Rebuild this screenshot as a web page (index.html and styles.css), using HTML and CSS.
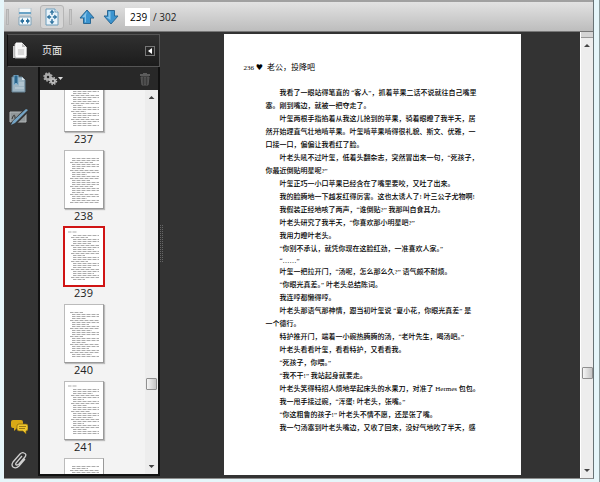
FILE: index.html
```html
<!DOCTYPE html>
<html lang="zh-CN">
<head>
    <meta charset="UTF-8">
    <meta name="viewport" content="width=device-width, initial-scale=1.0">
    <title>老公，投降吧</title>
    <link rel="stylesheet" href="styles.css">
</head>
<body>
    <div class="window">
        <header class="toolbar">
            <span class="grip"></span>
            <button type="button" class="tool-btn" aria-label="适合宽度">
                <svg width="14" height="18" viewBox="0 0 14 18">
                    <path d="M1 0h12v7H1z" fill="#f4f8fa" stroke="#b4c2ca"/>
                    <path d="M1 4h12v2H1z" fill="#6aa3c6"/>
                    <path d="M1 9h12v8H1z" fill="#f4f9fc" stroke="#7fa3ba"/>
                    <path d="M2 13l3-3v2h1v2H5v2zM12 13l-3-3v2H8v2h1v2z" fill="#2d729f"/>
                </svg>
            </button>
            <button type="button" class="tool-btn active" aria-label="适合页面">
                <svg width="14" height="18" viewBox="0 0 14 18">
                    <path d="M1 1h9l3 3v13H1z" fill="#e8f3fa" stroke="#6d9dbb"/>
                    <path d="M7 2l2 2.500H7.500v2h-1v-2H5zM7 16l2-2.500H7.500v-2h-1v2H5zM2 9l2.500-2v1.500h1.500v1H4.500V11zM12 9L9.500 7v1.500H8v1h1.500V11z" fill="#2d729f" stroke="#2d729f" stroke-width=".5"/>
                    <path d="M10 1v3h3" fill="#fff" stroke="#6d9dbb"/>
                </svg>
            </button>
            <span class="grip"></span>
            <button type="button" class="tool-btn arrow" aria-label="上一页">
                <svg width="16" height="16" viewBox="0 0 16 16">
                    <path d="M8 1l7 8h-3.500v5.500h-7V9H1z" fill="#3c94cf" stroke="#2b6894" stroke-linejoin="round"/>
                    <path d="M8 2.500L3 8.300h3v5h1V6z" fill="#86c3e8"/>
                </svg>
            </button>
            <button type="button" class="tool-btn arrow" aria-label="下一页">
                <svg width="16" height="16" viewBox="0 0 16 16">
                    <path d="M8 15l7-8h-3.500V1.500h-7V7H1z" fill="#3c94cf" stroke="#2b6894" stroke-linejoin="round"/>
                    <path d="M5.500 2.500h2V11L3 8h2.500z" fill="#86c3e8"/>
                </svg>
            </button>
            <input type="text" class="page-input" value="239" aria-label="页码">
            <span class="page-total">/ 302</span>
        </header>

        <div class="workspace">
            <aside class="sidebar">
                <div class="panel-head">
                    <button type="button" class="nav-btn" aria-label="页面">
                        <svg width="16" height="18" viewBox="0 0 16 18">
                            <path d="M1 4h10v12H1z" fill="#c9c9c9"/>
                            <path d="M3 2h8l3 3v11H3z" fill="#fff" stroke="#aaa"/>
                            <path d="M4 1h6l4 4v9H4z" fill="#f4f4f4" stroke="#fff"/>
                            <path d="M10 1v4h4" fill="#bbb"/>
                            <path d="M6 7h6v6H6z" fill="#d9d9d9"/>
                        </svg>
                    </button>
                    <h1>页面</h1>
                    <button type="button" class="collapse" aria-label="折叠">
                        <svg width="4" height="6" viewBox="0 0 4 6"><path d="M0 3l4-3v6z" fill="#fff"/></svg>
                    </button>
                </div>
                <div class="panel-body">
                    <nav class="rail">
                        <button type="button" class="nav-btn" aria-label="书签">
                            <svg width="16" height="18" viewBox="0 0 16 18">
                                <path d="M1 2h10l3 3v12H1z" fill="#9db5c3" stroke="#668395"/>
                                <path d="M11 2v3h3" fill="#dce7ee"/>
                                <path d="M3 0h4v10L5 8l-2 2z" fill="#2b668c" stroke="#81afcc"/>
                                <path d="M8 8h5M8 10h5M4 13h9" stroke="#c4d4dd"/>
                            </svg>
                        </button>
                        <button type="button" class="nav-btn" aria-label="签名">
                            <svg width="20" height="18" viewBox="0 0 20 18">
                                <path d="M1 4h16v10H1z" fill="#909698" stroke="#b2b7b9"/>
                                <path d="M3 11c2-6 3-4 3-1s3-3 3 0" fill="none" stroke="#333"/>
                                <path d="M3 17L19 1" stroke="#333" stroke-width="5"/>
                                <path d="M2 17l2-4L17 1l2 1L6 15z" fill="#74a4c5"/>
                            </svg>
                        </button>
                        <button type="button" class="nav-btn rail-bottom" aria-label="注释">
                            <svg width="18" height="16" viewBox="0 0 18 16">
                                <path d="M3 1h8q2 0 2 2v4q0 2-2 2H7l-3 3V9H3Q1 9 1 7V3q0-2 2-2z" fill="#d9a916"/>
                                <path d="M9 5h7q2 0 2 2v3q0 2-2 2v3l-3-3H9q-2 0-2-2V7q0-2 2-2z" fill="#efc62c" stroke="#806211" stroke-width=".7"/>
                                <path d="M9 7.500h7M9 9.500h6" stroke="#9d7916"/>
                            </svg>
                        </button>
                        <button type="button" class="nav-btn" aria-label="附件">
                            <svg width="18" height="18" viewBox="0 0 18 18">
                                <path d="M12 5l-6 7q-1 2 1 2l2-1 6-7q2-3-1-4-2-1-4 1l-7 8q-2 3 0 5 3 2 6-1l6-7" fill="none" stroke="#d0d0d0" stroke-width="1.300"/>
                            </svg>
                        </button>
                    </nav>
                    <div class="pages">
                        <div class="options">
                            <button type="button" class="option-btn" aria-label="选项">
                                <svg width="20" height="14" viewBox="0 0 20 14">
                                    <circle cx="5" cy="5" r="2.500" fill="none" stroke="#aaa" stroke-width="2.500"/>
                                    <circle cx="5" cy="5" r="4" fill="none" stroke="#aaa" stroke-width="1.500" stroke-dasharray="1.600 1.540"/>
                                    <circle cx="10" cy="9" r="2" fill="#333" stroke="#bbb" stroke-width="2"/>
                                    <circle cx="10" cy="9" r="3.500" fill="none" stroke="#bbb" stroke-width="1.500" stroke-dasharray="1.400 1.350"/>
                                    <path d="M15 5h5l-2.500 3z" fill="#ddd"/>
                                </svg>
                            </button>
                            <button type="button" class="option-btn" aria-label="删除" disabled>
                                <svg width="12" height="14" viewBox="0 0 12 14">
                                    <path d="M1 3h10M4 2h4" stroke="#5c5c5c" stroke-width="2"/>
                                    <path d="M2 5h8l-1 8H3z" fill="#4c4c4c" stroke="#585858"/>
                                    <path d="M4.500 5v8M7.500 5v8" stroke="#3b3b3b"/>
                                </svg>
                            </button>
                        </div>
                        <div class="thumb-area">
                            <div class="thumbs" id="thumbs"></div>
                            <div class="scrollbar">
                                <span class="scroll-up"></span>
                                <span class="scroll-thumb"></span>
                                <span class="scroll-down"></span>
                            </div>
                        </div>
                    </div>
                </div>
            </aside>

            <div class="splitter"><span></span></div>

            <main class="viewer">
                <article class="page">
                    <h2><span class="folio">236 <span class="heart">♥</span></span>老公，投降吧</h2>
                    <p>我看了一眼站得笔直的 “客人”，抓着苹果二话不说就往自己嘴里<br>塞。刚到嘴边，就被一把夺走了。</p>
                    <p>叶玺两根手指掐着从我这儿抢到的苹果，骑着眼瞪了我半天，居<br>然开始理直气壮地啃苹果。叶玺啃苹果啃得很礼貌、斯文、优雅，一<br>口接一口，偏偏让我看红了脸。</p>
                    <p>叶老头吼不过叶玺，低着头翻杂志，突然冒出来一句，“死孩子，<br>你最近倒贴明星呢?”</p>
                    <p>叶玺正巧一小口苹果已经含在了嘴里要咬，又吐了出来。</p>
                    <p>我的脸腾地一下越发红得厉害。这也太诱人了! 叶三公子尤物啊!</p>
                    <p>我假装正经地咳了两声，“谁倒贴?” 我那叫自食其力。</p>
                    <p>叶老头研究了我半天，“你喜欢那小明星吧?”</p>
                    <p>我用力瞪叶老头。</p>
                    <p>“你别不承认，就凭你现在这脸红劲，一准喜欢人家。”</p>
                    <p class="pause">“……”</p>
                    <p>叶玺一把拉开门，“汤呢，怎么那么久?” 语气颇不耐烦。</p>
                    <p>“你眼光真差。” 叶老头总结陈词。</p>
                    <p>我连哼都懒得哼。</p>
                    <p>叶老头那语气那神情，跟当初叶玺说 “夏小花，你眼光真差” 是<br>一个德行。</p>
                    <p>特护推开门，端着一小碗热腾腾的汤，“老叶先生，喝汤吧。”</p>
                    <p>叶老头看看叶玺，看看特护，又看看我。</p>
                    <p>“死孩子，你喂。”</p>
                    <p>“我不干!” 我站起身就要走。</p>
                    <p>叶老头笑得特招人烦地举起床头的水果刀，对准了 Hermes 包包。</p>
                    <p>我一甩手接过碗，“浑蛋! 叶老头，张嘴。”</p>
                    <p>“你这粗鲁的孩子!” 叶老头不情不愿，还是张了嘴。</p>
                    <p>我一勺汤塞到叶老头嘴边，又收了回来，没好气地吹了半天，感</p>
                </article>
            </main>
            <div class="scrollbar main-scroll">
                <span class="split-box"></span>
                <span class="scroll-up"></span>
                <span class="scroll-thumb"></span>
                <span class="scroll-down"></span>
            </div>
        </div>
    </div>
    <script src="script.js"></script>
</body>
</html>
```
FILE: styles.css
```css
* {
    box-sizing: border-box;
}

body {
    margin: 0;
    height: 100vh;
    padding: 0 5px 3px 4px;
    border-right: 1px solid #8b9a9c;
    background-color: #e6f6fa;
    font-family: "Open Sans", "Noto Sans CJK SC", sans-serif;
    overflow: hidden;
}

button {
    display: flex;
    align-items: center;
    justify-content: center;
    padding: 0;
    border: none;
    background: none;
}

svg {
    display: block;
}

.window {
    display: flex;
    flex-direction: column;
    height: 100%;
    border-right: 1px solid #687376;
    border-bottom: 1px solid #8c8c8c;
    background-color: #333;
}

.toolbar {
    display: flex;
    flex: none;
    align-items: center;
    height: 32px;
    padding-left: 2px;
    border-top: 2px solid #a0a0a0;
    border-bottom: 1px solid #777;
    background: linear-gradient(#e2e2e2, #bdbdbd);
    font-size: 10px;
    color: #222;
}

.grip {
    width: 3px;
    height: 16px;
    border: 1px solid #b4b4b4;
    background-color: #c8c8c8;
}

.tool-btn {
    width: 24px;
    height: 24px;
    margin-left: 4px;
    border: 1px solid transparent;
    border-radius: 3px;
}

.tool-btn + .tool-btn {
    margin-left: 3px;
}

.tool-btn.active {
    margin-right: 5px;
    border-color: #b5b5b5;
    background-color: #d5d5d5;
}

.tool-btn.arrow {
    margin-left: 3px;
}

.tool-btn.arrow + .arrow {
    margin-left: 0;
}

.page-input {
    width: 25px;
    height: 18px;
    margin-left: 2px;
    padding: 0 0 0 5px;
    border: none;
    background-color: #fff;
    font: inherit;
}

.page-total {
    margin-left: 3px;
}

.workspace {
    display: flex;
    flex: 1;
    min-height: 0;
}

.sidebar {
    display: flex;
    flex: none;
    flex-direction: column;
    width: 156px;
    padding: 2px 0 2px 3px;
}

.panel-head {
    display: flex;
    flex: none;
    align-items: center;
    height: 33px;
    padding-right: 4px;
    border: 1px solid #555;
    border-left-color: #111;
    background: linear-gradient(#303030, #1c1c1c);
}

.panel-head h1 {
    flex: 1;
    margin: 0 0 2px 10px;
    font-size: 10px;
    font-weight: normal;
    line-height: 14px;
    color: #eee;
}

.nav-btn {
    width: 24px;
    height: 24px;
}

.collapse {
    width: 10px;
    height: 10px;
    border: 1px solid #777;
}

.panel-body {
    display: flex;
    flex: 1;
    min-height: 0;
}

.rail {
    display: flex;
    flex: none;
    flex-direction: column;
    gap: 9px;
    width: 31px;
    padding: 5px 0 4px;
}

.rail-bottom {
    margin-top: auto;
}

.pages {
    display: flex;
    flex: 1;
    flex-direction: column;
    min-width: 0;
    border: 2px solid #111;
    border-top: none;
}

.options {
    display: flex;
    flex: none;
    align-items: center;
    justify-content: space-between;
    height: 23px;
    padding: 0 7px 0 3px;
    background-color: #282828;
}

.thumb-area {
    display: flex;
    flex: 1;
    min-height: 0;
    background-color: #f3f3f3;
}

/* list is scrolled part-way, so it is anchored to its lower edge */
.thumbs {
    display: flex;
    flex: 1;
    flex-direction: column;
    align-items: center;
    justify-content: flex-end;
    gap: 4px;
    height: 100%;
    padding-right: 18px;
    overflow: hidden;
}

.thumb {
    flex: none;
    width: 40px;
    margin: 0;
    text-align: center;
    font-size: 11px;
    line-height: 14px;
    color: #222;
}

.thumb-page {
    display: block;
    width: 40px;
    height: 59px;
    border: 1px solid #bbb;
    border-right-color: #999;
    border-bottom-color: #999;
    background-color: #fff;
    box-shadow: 1px 1px 1px #bbb;
}

.thumb.current .thumb-page {
    border: 1px solid #d01414;
    box-shadow: 0 0 0 1px #d01414;
}

.thumb.clipped {
    height: 16px;
    overflow: hidden;
}

.scrollbar {
    display: flex;
    flex: none;
    flex-direction: column;
    align-items: center;
    width: 13px;
    background-color: #ededed;
}

.scroll-up,
.scroll-down {
    flex: none;
    width: 6px;
    height: 3px;
    background-color: #444;
}

.scroll-up {
    margin-top: 6px;
    clip-path: polygon(50% 0, 100% 100%, 0 100%);
}

.scroll-down {
    margin: auto 0 6px;
    clip-path: polygon(0 0, 100% 0, 50% 100%);
}

.scroll-thumb {
    flex: none;
    width: 11px;
    height: 12px;
    margin-top: 279px;
    border: 1px solid #909090;
    border-radius: 1px;
    background: linear-gradient(90deg, #f5f5f5, #c4c4c4);
}

.splitter {
    display: flex;
    flex: none;
    align-items: center;
    width: 4px;
}

.splitter span {
    width: 3px;
    height: 37px;
    margin-bottom: 24px;
    border: 1px dotted #666;
}

.viewer {
    display: flex;
    flex: 1;
    justify-content: center;
    min-width: 0;
    padding: 2px 0 3px;
}

.page {
    width: 297px;
    padding: 27px 0 0 42px;
    background-color: #fff;
    font-family: "Liberation Serif", "Noto Sans CJK SC", serif;
    font-size: 7px;
    font-weight: 500;
    line-height: 13px;
    white-space: nowrap;
    color: #000;
    overflow: hidden;
}

.page h2 {
    margin: 0 0 12px -22px;
    font-size: 8px;
    font-weight: normal;
    line-height: 13px;
}

.folio {
    margin-right: 4px;
    font-size: 7px;
}

.heart {
    font-family: "DejaVu Sans", sans-serif;
    font-size: 8px;
}

.page p {
    margin: 0;
    text-indent: 2em;
}

.page .pause {
    line-height: 10px;
}

.main-scroll {
    border-left: 1px solid #fff;
}

.split-box {
    flex: none;
    width: 100%;
    height: 6px;
    border-bottom: 1px solid #999;
    background-color: #d5d5d5;
}

.main-scroll .scroll-thumb {
    margin-top: 320px;
}
```
FILE: script.js
```js
const pages = [237, 238, 239, 240, 241, 242];
const thumbs = document.getElementById('thumbs');

// rows of tiny strokes that stand for the lines of text on a page
function drawLines(page) {
    const left = page % 2 ? 6 : 5;
    let paths = page % 2 ? '<path d="M3 4H12"/>' : '';
    for (let i = 0; i < 23; i++) {
        const indent = (i * 5 + page) % 4 === 0 ? left : left + 2;
        const end = (i * 7 + page) % 3 === 0 ? 18 + (i * 5) % 12 : 34;
        paths += `<path d="M${indent} ${7.5 + i * 2}H${end}"/>`;
    }
    return `<svg width="38" height="57" viewBox="0 0 38 57" fill="none" stroke="#888" stroke-width=".7" stroke-dasharray="3 .5 1 .5">${paths}</svg>`;
}

pages.forEach((page, i) => {
    const last = i === pages.length - 1;
    const item = document.createElement('figure');
    item.className = 'thumb';
    if (page === 239) item.classList.add('current');
    if (last) item.classList.add('clipped');
    // the caption of the last page lies below the visible part of the list
    const caption = last ? '' : `<figcaption>${page}</figcaption>`;
    item.innerHTML = `<span class="thumb-page">${drawLines(page)}</span>${caption}`;
    thumbs.appendChild(item);
});
```
